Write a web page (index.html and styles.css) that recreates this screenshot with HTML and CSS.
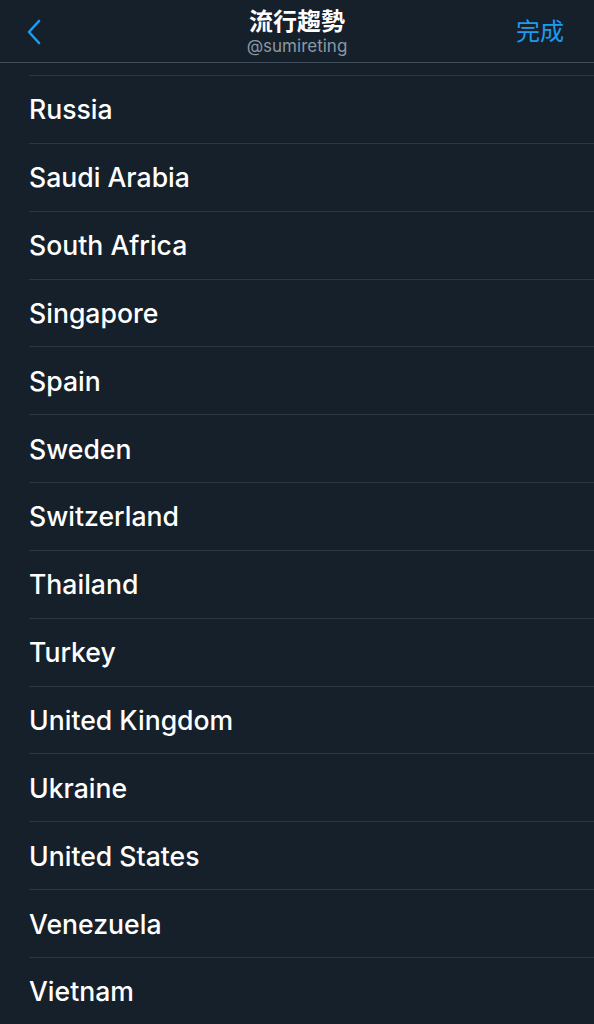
FILE: index.html
```html
<!DOCTYPE html>
<html>
<head>
<meta charset="utf-8">
<link rel="stylesheet" href="styles.css">
</head>
<body>
<header class="nav">
  <div class="back">
    <svg width="16" height="26" viewBox="0 0 16 26"><path d="M13 2 L3 13 L13 24" fill="none" stroke="#1d9bf0" stroke-width="2.6" stroke-linecap="round" stroke-linejoin="round"/></svg>
  </div>
  <div class="title">
    <div class="main">流行趨勢</div>
    <div class="sub">@sumireting</div>
  </div>
  <div class="done">完成</div>
</header>
<ul class="list">
  <li>Russia</li>
  <li>Saudi Arabia</li>
  <li>South Africa</li>
  <li>Singapore</li>
  <li>Spain</li>
  <li>Sweden</li>
  <li>Switzerland</li>
  <li>Thailand</li>
  <li>Turkey</li>
  <li>United Kingdom</li>
  <li>Ukraine</li>
  <li>United States</li>
  <li>Venezuela</li>
  <li>Vietnam</li>
</ul>
</body>
</html>
```
FILE: styles.css
```css
html, body {
  margin: 0;
  padding: 0;
  background: #16202b;
  height: 1024px;
  overflow: hidden;
}
body {
  font-family: Inter, "Noto Sans CJK TC", sans-serif;
  color: #ffffff;
}
.nav {
  height: 62px;
  border-bottom: 1px solid #3f4c59;
  display: flex;
  align-items: center;
  justify-content: space-between;
  padding: 0 30px 0 26px;
  position: relative;
}
.back {
  width: 60px;
  display: flex;
  align-items: center;
  padding-top: 2px;
}
.title {
  position: absolute;
  left: 0;
  right: 0;
  top: 6px;
  text-align: center;
  pointer-events: none;
}
.title .main {
  font-family: "Noto Sans CJK TC", sans-serif;
  font-weight: 700;
  font-size: 24px;
  line-height: 28px;
}
.title .sub {
  font-size: 17px;
  line-height: 20px;
  color: #8899a6;
  margin-top: 2px;
}
.done {
  font-family: "Noto Sans CJK TC", sans-serif;
  font-size: 24px;
  line-height: 28px;
  color: #1d9bf0;
  padding-bottom: 2px;
}
.list {
  list-style: none;
  margin: 12px 0 0 29px;
  padding: 0;
}
.list li {
  border-top: 1px solid #2c3743;
  height: 66.85px;
  display: flex;
  align-items: center;
  font-size: 26.6px;
  font-weight: 500;
}
```
